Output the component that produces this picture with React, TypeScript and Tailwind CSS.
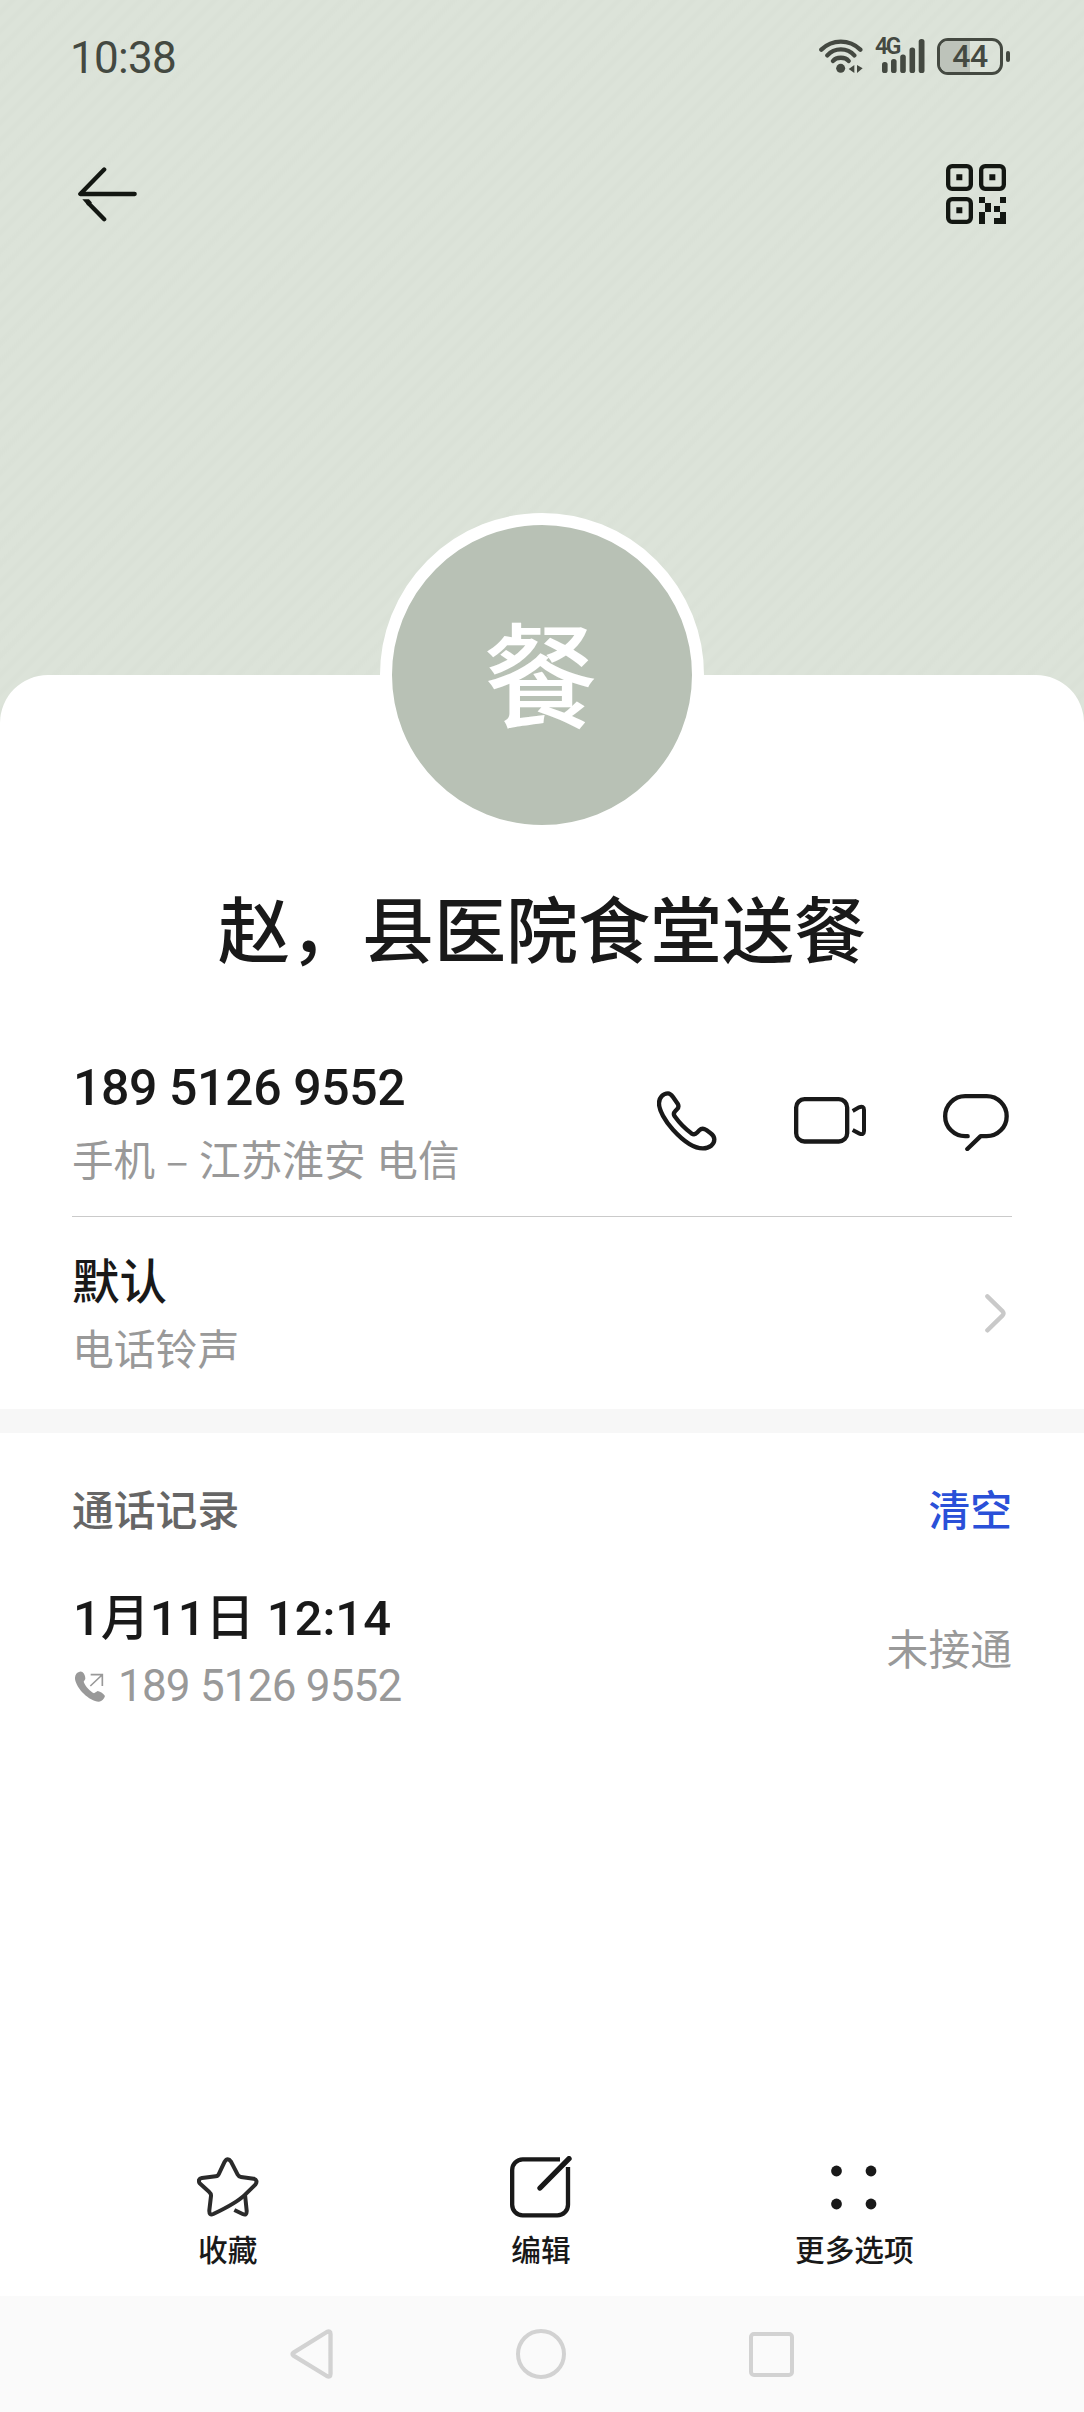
import type { ReactNode } from "react"

function WifiIcon() {
  return (
    <svg width="44" height="34" viewBox="0 0 132 102" fill="none" stroke="#444941" strokeWidth="13" strokeLinecap="round">
      <path d="M7 32C40 0 91 0 124 32M25 49C46 25 85 25 106 49M42 66C52 53 79 53 89 66" />
      <g fill="#444941" stroke="none">
        <circle cx="65" cy="88" r="13.5" />
        <path d="M89 90L106 78V102ZM114 78L131 88L114 102Z" />
      </g>
    </svg>
  )
}

function SignalIcon() {
  return (
    <div className="relative h-[34px] w-[50px]">
      <span className="absolute -top-[3px] left-0 text-[23px] leading-[22px] font-semibold tracking-[-2.5px]">4G</span>
      <svg width="50" height="34" viewBox="0 0 50 34" fill="#444941">
        <rect x="7" y="23" width="5.6" height="11" rx="2.6" />
        <rect x="16" y="20" width="5.6" height="14" rx="2.6" />
        <rect x="25.2" y="15.5" width="5.6" height="18.5" rx="2.6" />
        <rect x="34.5" y="8.5" width="5.6" height="25.5" rx="2.6" />
        <rect x="43.7" y="0" width="5.8" height="34" rx="2.6" />
      </svg>
    </div>
  )
}

function Battery({ level }: { level: number }) {
  return (
    <div className="flex items-center gap-[3px]">
      <div className="relative flex h-[37px] w-[66px] items-center justify-center overflow-hidden rounded-[11px] border-[3px] border-[#444941]">
        <div className="absolute inset-y-0 left-0 bg-[#bdc3ba]" style={{ width: `${level + 6}%` }} />
        <span className="relative text-[32px] leading-[31px] font-medium tracking-[-0.5px]">{level}</span>
      </div>
      <div className="h-[11px] w-[4px] rounded-[2px] bg-[#444941]" />
    </div>
  )
}

function BackIcon() {
  return (
    <svg width="59" height="55" viewBox="0 0 178 165" fill="none" stroke="#131712" strokeWidth="13" strokeLinecap="round" strokeLinejoin="round">
      <path d="M79 7L7 81H171M79 157L31 108" />
      <path d="M13 97H33L42 107L31 117Z" fill="#131712" stroke="none" />
    </svg>
  )
}

function QrIcon() {
  return (
    <svg width="60" height="60" viewBox="0 0 180 180" fill="#131712">
      <g fill="none" stroke="#131712" strokeWidth="13">
        <rect x="6.5" y="6.5" width="68" height="68" rx="12" />
        <rect x="105.5" y="6.5" width="68" height="68" rx="12" />
        <rect x="6.5" y="105.5" width="68" height="68" rx="12" />
      </g>
      <path d="M31 31h18v18h-18zM130 31h18v18h-18zM31 130h18v18h-18z" />
      <path d="M99 99h18v18h18v27h-18v-27h-18zM162 99h18v18h-18zM144 126h18v18h-18zM99 144h18v36h-18zM162 144h18v36h-36v-18h18z" />
    </svg>
  )
}

function CallIcon() {
  return (
    <svg width="60" height="60" viewBox="0 0 180 180" fill="none" stroke="#191919" strokeWidth="13" strokeLinejoin="round">
      <path d="M33 7C18 7 6 20 6 37C6 58 24 90 48 116C78 149 110 172 138 172C158 172 172 160 172 145C172 138 168 132 160 126L148 117C140 112 133 112 127 118L120 125C115 131 109 131 103 127C85 114 66 94 53 76C49 70 50 65 55 60L60 55C66 49 66 45 62 38L48 18C43 11 40 7 33 7Z" />
    </svg>
  )
}

function VideoIcon() {
  return (
    <svg width="72" height="47" viewBox="0 0 216 141" fill="none" stroke="#191919" strokeWidth="13">
      <rect x="6.5" y="6.5" width="153" height="127" rx="25" />
      <path d="M176 42L195 31Q210 25 210 39V102Q210 116 195 109L176 99" strokeWidth="12" />
    </svg>
  )
}

function MessageIcon() {
  return (
    <svg className="mt-[3px]" width="66" height="57" viewBox="0 0 198 171" fill="none" stroke="#191919" strokeWidth="13" strokeLinecap="round" strokeLinejoin="round">
      <path d="M74 126.500H66.500A60 60 0 0 1 66.500 6.500H131A60 60 0 0 1 131 126.500H113L73 165" />
    </svg>
  )
}

function OutgoingIcon() {
  return (
    <svg width="30" height="31" viewBox="0 0 90 93" fill="#999999">
      <path d="M14 2Q-1 6 0 24C5 54 42 90 72 92Q86 89 90 75Q82 63 68 60L57 67C45 60 31 46 26 32L31 24Q31 10 22 3Q18 0 14 2Z" />
      <path d="M46 45L81 12M47 11H82V45" fill="none" stroke="#999999" strokeWidth="5" />
    </svg>
  )
}

function StarIcon() {
  return (
    <svg width="62" height="60" viewBox="0 0 186 180" fill="none" stroke="#2b2b2b" strokeWidth="12" strokeLinejoin="round">
      <path d="M49 171C80 156 118 138 142 115L175 83Q184 70 170 65L132 60Q125 59 122 53L102 14Q92 -1 83 14L66 50Q63 57 56 58L15 63Q1 66 8 79L36 104Q43 110 42 117L37 160Q36 176 49 171Z" />
      <path d="M144 112L149 161Q150 177 137 171L112 159" />
    </svg>
  )
}

function EditIcon() {
  return (
    <svg width="62" height="62" viewBox="0 0 186 186" fill="none" stroke="#191919" strokeWidth="13">
      <path d="M150 10H38A32 32 0 0 0 6.500 42V146A32 32 0 0 0 38 178H142A32 32 0 0 0 174 146V33" />
      <path d="M90 96L177 8" strokeWidth="16" strokeLinecap="round" />
    </svg>
  )
}

function MoreIcon() {
  return (
    <svg width="62" height="62" viewBox="0 0 62 62" fill="#191919">
      <circle cx="13.500" cy="15" r="5.400" />
      <circle cx="48" cy="15" r="5.400" />
      <circle cx="13.500" cy="48" r="5.400" />
      <circle cx="48" cy="48" r="5.400" />
    </svg>
  )
}

function ActionButton({ icon, label }: { icon: ReactNode; label: string }) {
  return (
    <button className="flex flex-col items-center">
      <span className="flex h-[62px] items-center">{icon}</span>
      <span className="mt-[13px] text-[29.7px] leading-[36px] font-medium">{label}</span>
    </button>
  )
}

const cjk = "font-['Noto_Sans_CJK_SC',sans-serif]"
const latin = "font-[Roboto,'Noto_Sans_CJK_SC',sans-serif]"

export default function App() {
  return (
    <div className={`flex h-[2412px] w-[1084px] flex-col overflow-hidden bg-[#dce3d9] bg-[repeating-linear-gradient(135deg,#dce3d9_0px,#dce3d9_5px,#dae1d7_8px,#dae1d7_10px,#dce3d9_13px)] whitespace-nowrap text-[#191919] ${cjk}`}>
      <header className="h-[675px] shrink-0">
        <div className={`flex h-28 items-center justify-between pr-[74px] pl-[70px] text-[#444941] ${latin}`}>
          <span className="pt-[3px] text-[44px] leading-[44px] tracking-[-0.7px]">10:38</span>
          <div className="flex items-center gap-[12px]">
            <WifiIcon />
            <SignalIcon />
            <Battery level={44} />
          </div>
        </div>
        <div className="flex h-[164px] items-center justify-between pr-[78px] pl-[78px]">
          <BackIcon />
          <QrIcon />
        </div>
      </header>

      <main className="flex flex-1 flex-col rounded-t-[48px] bg-white">
        <div className="mx-auto -mt-[162px] flex size-[324px] shrink-0 items-center justify-center rounded-full border-[12px] border-white bg-[#b8c1b5]">
          <span className="pr-[3px] pb-[10px] text-[114px] leading-[114px] font-medium text-white">餐</span>
        </div>
        <h1 className="mt-[43px] text-center text-[72px] leading-[92px] font-medium">赵，县医院食堂送餐</h1>

        <section className="mt-[86px] px-[72px]">
          <div className="flex items-center justify-between border-b border-[#cacaca] pb-[33px]">
            <div>
              <div className={`pl-[1px] text-[50px] leading-[60px] font-medium tracking-[-0.4px] ${latin}`}>189 5126 9552</div>
              <div className="mt-[15px] text-[41.6px] leading-[50px] text-[#999999] [word-spacing:1.5px]">手机 – 江苏淮安 电信</div>
            </div>
            <div className="flex items-center gap-[77px] pr-[3px]">
              <CallIcon />
              <VideoIcon />
              <MessageIcon />
            </div>
          </div>
          <div className="flex items-center justify-between pt-[34px] pb-[37px]">
            <div>
              <div className="text-[47.5px] leading-[56px] font-medium">默认</div>
              <div className="mt-[15px] text-[41.8px] leading-[50px] text-[#999999]">电话铃声</div>
            </div>
            <svg className="mt-[3px] mr-[6px]" width="21" height="39" viewBox="0 0 63 117" fill="none" stroke="#c9c9c9" strokeWidth="13" strokeLinecap="round" strokeLinejoin="round">
              <path d="M7 7L53 52Q58 58 53 64L7 109" />
            </svg>
          </div>
        </section>

        <div className="h-6 bg-[#f7f7f7]" />

        <section className="px-[72px] pt-[50px]">
          <div className="flex items-center justify-between text-[41.8px] leading-[50px] font-medium">
            <h2 className="text-[#666666]">通话记录</h2>
            <button className="text-[#2a50d8]">清空</button>
          </div>
          <div className="mt-[56px] flex items-center justify-between">
            <div>
              <div className={`pl-[1px] text-[49px] leading-[60px] font-medium ${latin}`}>1月11日 12:14</div>
              <div className="mt-[12px] flex items-center pl-[3px] text-[#999999]">
                <OutgoingIcon />
                <span className={`ml-[13px] text-[44px] leading-[50px] tracking-[-0.8px] ${latin}`}>189 5126 9552</span>
              </div>
            </div>
            <span className="mb-[7px] text-[41.8px] leading-[50px] text-[#999999]">未接通</span>
          </div>
        </section>

        <div className="mt-auto grid grid-cols-3 pr-[73px] pl-[71px] pb-[29px]">
          <ActionButton icon={<StarIcon />} label="收藏" />
          <ActionButton icon={<EditIcon />} label="编辑" />
          <ActionButton icon={<MoreIcon />} label="更多选项" />
        </div>
      </main>

      <nav className="flex h-[116px] shrink-0 items-center justify-center gap-[183px] bg-[#fafafa] pr-[1px]">
        <svg width="43" height="50" viewBox="0 0 128 150" fill="none" stroke="#d2d2d2" strokeWidth="13" strokeLinejoin="round">
          <path d="M110 9Q121 4 121 15V135Q121 146 110 141L10 80Q4 75 10 71Z" />
        </svg>
        <div className="size-[50px] rounded-full border-[4px] border-[#d2d2d2]" />
        <div className="size-[45px] rounded-[5px] border-[4px] border-[#d2d2d2]" />
      </nav>
    </div>
  )
}
